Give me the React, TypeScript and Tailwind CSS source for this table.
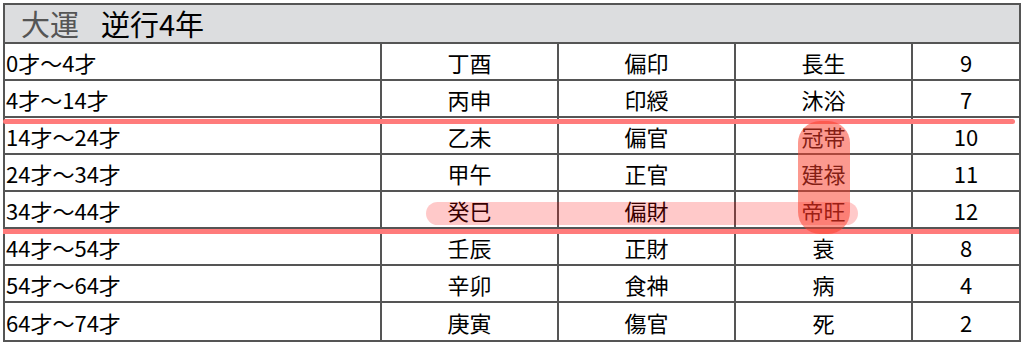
import React from 'react';

interface Row {
  age: string;
  kanshi: string;
  star: string;
  stage: string;
  power: number;
}

const rows: Row[] = [
  { age: '0才～4才', kanshi: '丁酉', star: '偏印', stage: '長生', power: 9 },
  { age: '4才～14才', kanshi: '丙申', star: '印綬', stage: '沐浴', power: 7 },
  { age: '14才～24才', kanshi: '乙未', star: '偏官', stage: '冠帯', power: 10 },
  { age: '24才～34才', kanshi: '甲午', star: '正官', stage: '建禄', power: 11 },
  { age: '34才～44才', kanshi: '癸巳', star: '偏財', stage: '帝旺', power: 12 },
  { age: '44才～54才', kanshi: '壬辰', star: '正財', stage: '衰', power: 8 },
  { age: '54才～64才', kanshi: '辛卯', star: '食神', stage: '病', power: 4 },
  { age: '64才～74才', kanshi: '庚寅', star: '傷官', stage: '死', power: 2 },
];

export default function App() {
  return (
    <div className="w-[1024px] h-[344px] bg-white pt-[3px] pl-[3px] overflow-hidden" style={{ fontFamily: '"Noto Sans CJK JP", "Noto Sans", sans-serif' }}>
      <div className="relative w-[1018px] border-2 border-[#555] text-black">
        {/* Title bar */}
        <div className="h-[39px] border-b-2 border-[#555] bg-[#dcdddf] flex items-center pl-[16px] text-[29px] leading-none">
          <span className="text-[#555]">大運</span>
          <span className="ml-[22px]">逆行4年</span>
        </div>

        {/* Rows */}
        {rows.map((r, i) => (
          <div
            key={r.age}
            className={`grid grid-cols-[377px_177px_177px_177px_106px] h-[37px] text-[22px] leading-none ${i < rows.length - 1 ? 'border-b-2 border-[#555]' : ''}`}
          >
            <div className="border-r-2 border-[#555] flex items-center pl-[1px]">{r.age}</div>
            <div className="border-r-2 border-[#555] flex items-center justify-center">{r.kanshi}</div>
            <div className="border-r-2 border-[#555] flex items-center justify-center">{r.star}</div>
            <div className="border-r-2 border-[#555] flex items-center justify-center">{r.stage}</div>
            <div className="flex items-center justify-center">{r.power}</div>
          </div>
        ))}

        {/* Highlight markers */}
        <div className="absolute left-[-2px] top-[114px] w-[1012px] h-[5px] rounded-full bg-[#ff7b7b]" />
        <div className="absolute left-[-2px] top-[224px] w-[1016px] h-[5px] bg-[#ff7b7b]" />
        <div className="absolute left-[421px] top-[197px] w-[432px] h-[23px] rounded-full bg-[rgba(255,0,0,0.21)]" />
        <div className="absolute left-[793px] top-[116px] w-[52px] h-[113px] rounded-[22px] bg-[rgba(250,60,40,0.52)]" />
      </div>
    </div>
  );
}
